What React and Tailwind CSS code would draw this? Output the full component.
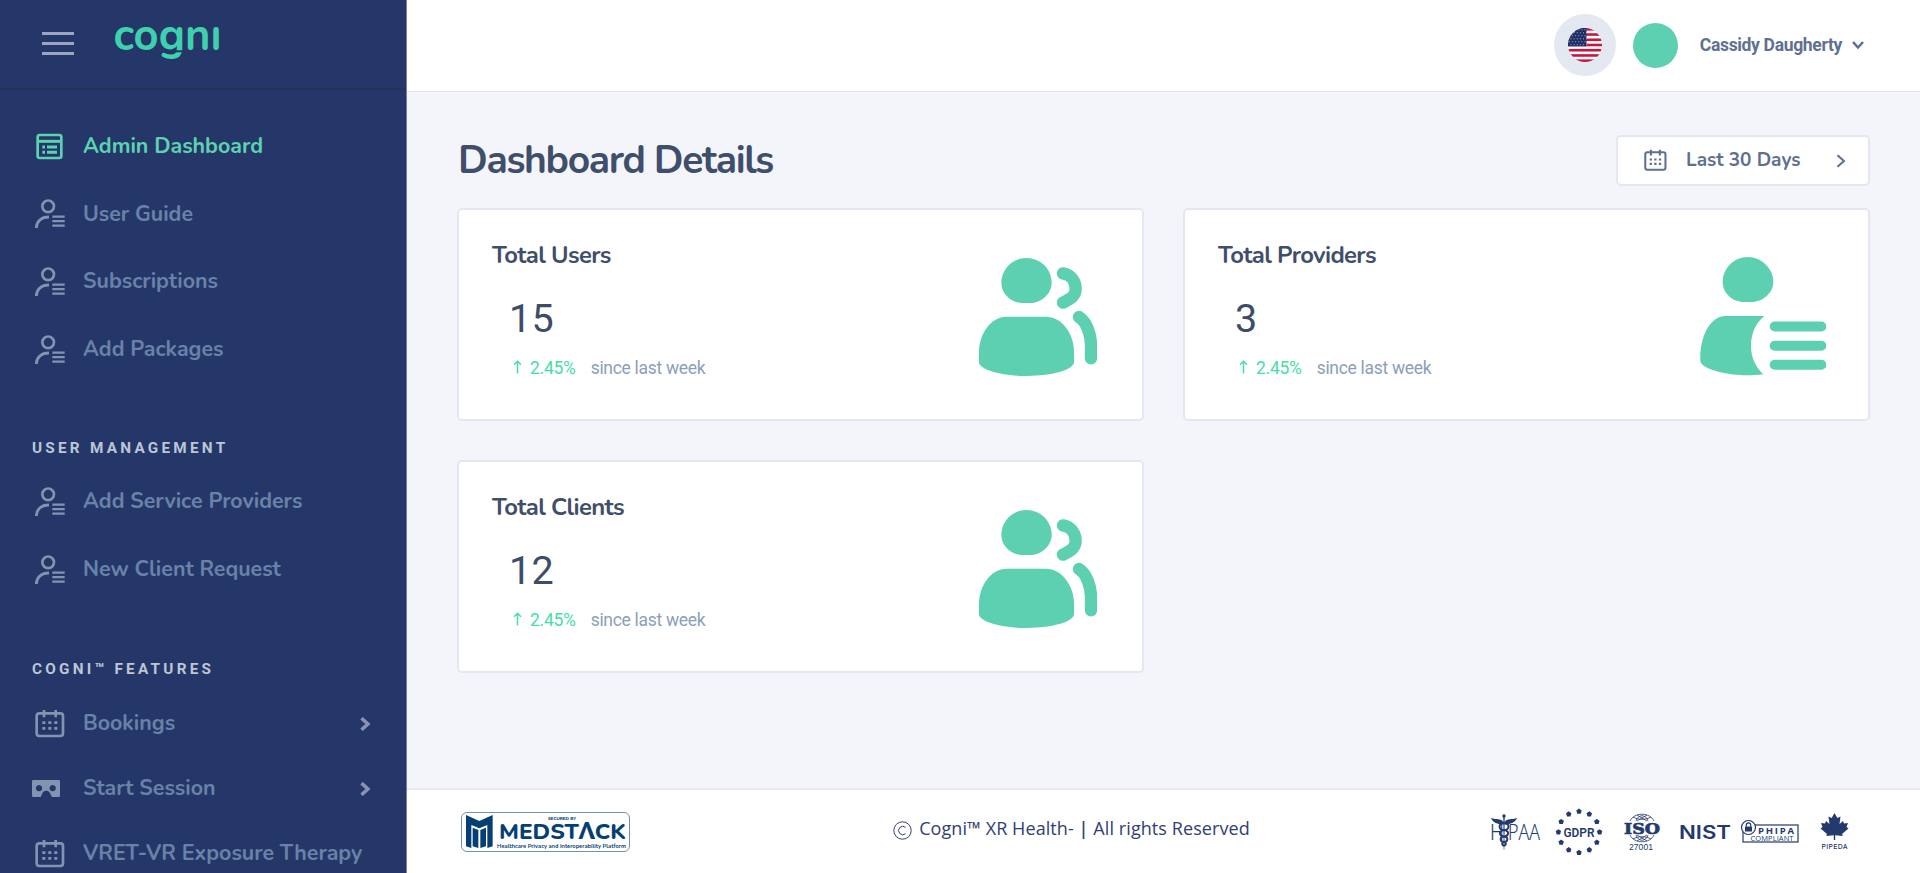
import React from "react";

const rounded = "font-['Nunito','Lato',sans-serif]";

function PersonListIcon() {
  return (
    <svg width="30" height="30" viewBox="0 0 90 90" fill="none" stroke="currentColor" className="shrink-0">
      <circle cx="39.5" cy="22" r="17.5" strokeWidth="8" />
      <path d="M4 87 C5 67 18 54 42 54" strokeWidth="8.500" />
      <path d="M52 53 H89 M52 66.500 H89 M52 80 H89" strokeWidth="7" />
    </svg>
  );
}

function BoardIcon() {
  return (
    <svg width="30" height="30" viewBox="0 0 90 90" fill="none" stroke="currentColor" className="shrink-0">
      <rect x="8" y="9" width="71" height="69" rx="6" strokeWidth="8" />
      <path d="M8 28 H80" strokeWidth="9" />
      <path d="M22 45 H30 M36 45 H66 M22 61 H30 M36 61 H66" strokeWidth="9" />
    </svg>
  );
}

function CalendarIcon({ size = 30 }) {
  return (
    <svg width={size} height={size} viewBox="0 0 90 90" fill="none" stroke="currentColor" className="shrink-0">
      <rect x="5" y="13" width="79" height="68" rx="8" strokeWidth="8" />
      <path d="M27 3 V25 M62 3 V25" strokeWidth="8" />
      <path d="M22 41 H31 M40 41 H49 M58 41 H67 M22 58 H31 M40 58 H49 M58 58 H67" strokeWidth="8.500" />
    </svg>
  );
}

function VrIcon() {
  return (
    <svg width="28" height="17" viewBox="0 0 84 51" className="shrink-0">
      <path
        fill="currentColor"
        fillRule="evenodd"
        d="M4 0 H80 Q84 0 84 4 V47 Q84 51 80 51 H60 L52 36 Q42 28 33 36 L26 51 H4 Q0 51 0 47 V4 Q0 0 4 0 Z M21 15 a9.500 9.500 0 1 0 .1 0 Z M62 15 a9.500 9.500 0 1 0 .1 0 Z"
      />
    </svg>
  );
}

function Chevron({ className, size = 12, width = 2.6 }) {
  return (
    <svg width={size} height={size} viewBox="0 0 12 12" fill="none" stroke="currentColor" strokeWidth={width} className={className}>
      <path d="M3 1 L8.500 6 L3 11" />
    </svg>
  );
}

function NavItem({ icon, label, active, arrow, short }) {
  return (
    <a
      className={`flex shrink-0 items-center pl-[35px] pr-[34px] ${short ? "h-[64.800px]" : "h-[67.600px]"} ${
        active ? "text-[#5dd2b1]" : "text-[#6982a8]"
      }`}
    >
      <span className={`flex w-[48px] items-center ${active ? "" : "text-[#8095b0]"}`}>{icon}</span>
      <span className={`${rounded} whitespace-nowrap text-[21.400px] font-bold leading-none`}>{label}</span>
      {arrow && <Chevron size={14} width={3} className="ml-auto text-[#8a93b0]" />}
    </a>
  );
}

function SectionTitle({ children, className }) {
  return (
    <div className={`shrink-0 whitespace-nowrap pl-8 font-['Roboto',sans-serif] text-[15.300px] font-bold leading-6 tracking-[3.250px] text-[#bcc6d6] ${className}`}>
      {children}
    </div>
  );
}

function Sidebar() {
  return (
    <aside className="flex h-full w-[407px] shrink-0 flex-col overflow-hidden border-r border-[#76829c] bg-[#253768]">
      <div className="flex h-[90px] shrink-0 items-start border-b-2 border-[#22325a] pl-[42px]">
        <button className="mt-8 flex w-[32px] flex-col gap-[7px]">
          <span className="h-[3px] bg-[#9ba5bf]" />
          <span className="h-[3px] bg-[#9ba5bf]" />
          <span className="h-[3px] bg-[#9ba5bf]" />
        </button>
        <svg width="112" height="66" viewBox="0 0 112 66" className="ml-[39px] mt-[7px] overflow-visible">
          <text x="0.500" y="42.500" textLength="108" lengthAdjust="spacingAndGlyphs" fontFamily="Nunito, Lato, sans-serif" fontWeight="700" fontSize="46" fill="#3fd0ae">
            cognı
          </text>
          <rect x="46" y="43.300" width="26" height="2" fill="#253768" />
        </svg>
      </div>
      <nav className="flex flex-col pt-[23px]">
        <NavItem active icon={<BoardIcon />} label="Admin Dashboard" />
        <NavItem icon={<PersonListIcon />} label="User Guide" />
        <NavItem icon={<PersonListIcon />} label="Subscriptions" />
        <NavItem icon={<PersonListIcon />} label="Add Packages" />
        <SectionTitle className="mt-[53px]">USER MANAGEMENT</SectionTitle>
        <div className="h-2" />
        <NavItem icon={<PersonListIcon />} label="Add Service Providers" />
        <NavItem icon={<PersonListIcon />} label="New Client Request" />
        <SectionTitle className="mt-[53px]">COGNI™ FEATURES</SectionTitle>
        <div className="h-[11px]" />
        <NavItem short arrow icon={<CalendarIcon />} label="Bookings" />
        <NavItem short arrow icon={<span className="-ml-[3px]"><VrIcon /></span>} label="Start Session" />
        <NavItem short icon={<CalendarIcon />} label="VRET-VR Exposure Therapy" />
      </nav>
    </aside>
  );
}

function UsFlag() {
  const stars = [];
  for (let r = 0; r < 6; r++) for (let c = 0; c < 6; c++) stars.push([1.5 + c * 3.1 + (r % 2) * 1.5, 1.8 + r * 3]);
  return (
    <svg width="34" height="34" viewBox="0 0 34 34">
      <clipPath id="flag"><circle cx="17" cy="17" r="17" /></clipPath>
      <g clipPath="url(#flag)">
        <rect width="34" height="34" fill="#fff" />
        {[0, 1, 2, 3, 4, 5, 6].map((i) => (
          <rect key={i} y={i * 5.23} width="34" height="2.615" fill="#c8173f" />
        ))}
        <rect width="18.500" height="18.300" fill="#1c2f66" />
        {stars.map(([x, y], i) => (
          <circle key={i} cx={x} cy={y} r="0.550" fill="#c9cfe0" />
        ))}
      </g>
    </svg>
  );
}

function TopBar() {
  return (
    <header className="flex h-[92px] shrink-0 items-center justify-end border-b border-[#e3e6f0] bg-white pb-px pr-[56px]">
      <div className="flex size-[62px] items-center justify-center rounded-full bg-[#e4e8f1]">
        <UsFlag />
      </div>
      <div className="ml-[17px] size-[45px] rounded-full bg-[#5dd0b1]" />
      <span className="ml-[22px] font-['Roboto',sans-serif] text-[17.500px] font-bold tracking-[-0.330px] text-[#5f7092]">Cassidy Daugherty</span>
      <Chevron size={12} width={2.4} className="ml-[10px] rotate-90 text-[#5a6c8f]" />
    </header>
  );
}

function UsersArt() {
  return (
    <svg width="118.500" height="118" viewBox="117 174 355.500 354" fill="#5dd0b1">
      <path d="M259 174 C302 174 335 208 335 248 C335 283 302 309 270 309 H248 C214 309 184 282 184 248 C184 208 217 174 259 174Z" />
      <path d="M200 350 H318 C366 350 402 402 402 455 V487 C402 508 340 528 260 528 C180 528 117 508 117 487 V455 C117 402 152 350 200 350Z" />
      <path d="M369 220 C392 224 407 243 407 267 C407 290 388 297 369 308 M417 351 C440 365 453 405 453 435 V475" fill="none" stroke="#5dd0b1" strokeWidth="37" strokeLinecap="round" strokeLinejoin="round" />
    </svg>
  );
}

function ProvidersArt() {
  return (
    <svg width="126.500" height="118.500" viewBox="180 169 379.500 355.500" fill="#5dd0b1">
      <path d="M323 169 C366 169 400 205 400 244 C400 278 366 304 335 304 H311 C278 304 248 278 248 244 C248 204 281 169 323 169Z" />
      <path d="M256 346 H373 C346 368 333 400 333 436 C333 470 347 500 370 521 C352 523.500 340 524 322 524 C240 522 181 500 181 480 C179 400 215 346 256 346Z" />
      <path d="M404 377.500 H544 M404 435 H544 M404 492.500 H544" fill="none" stroke="#5dd0b1" strokeWidth="30" strokeLinecap="round" />
    </svg>
  );
}

function StatCard({ title, value, art, artPad }) {
  return (
    <section className={`flex h-[213px] items-start justify-between rounded-[5px] border-2 border-[#e4e7f0] bg-white pl-[33px] ${artPad}`}>
      <div>
        <h2 className={`${rounded} mt-[29px] text-[23.800px] font-bold leading-8 tracking-[-0.620px] text-[#3f4f6b]`}>{title}</h2>
        <div className="ml-[17px] mt-[25px] font-['Roboto',sans-serif] text-[39.500px] leading-[46px] tracking-[0.200px] text-[#3d4d69]">{value}</div>
        <div className="ml-[21px] mt-[14px] flex items-center font-['Roboto',sans-serif] text-[17.500px] leading-6">
          <svg width="9" height="14" viewBox="0 0 9 14" fill="none" stroke="#46dda6" strokeWidth="1.500" className="-mt-0.5">
            <path d="M4.500 13.500 V1.500 M1 4.800 L4.500 1.300 L8 4.800" />
          </svg>
          <span className="ml-[8px] tracking-[-0.250px] text-[#46dda6]">2.45%</span>
          <span className="ml-[15px] tracking-[-0.300px] text-[#8ba0b8]">since last week</span>
        </div>
      </div>
      {art}
    </section>
  );
}

function Medstack() {
  return (
    <div className="flex h-[40px] w-[169px] items-center rounded-[6px] border border-[#7590ae] pl-1 text-[#063f73]">
      <svg width="27" height="33" viewBox="0 0 81 99" fill="currentColor">
        <path d="M0 0 L40 18 L80 0 V94 L64 99 V30 L40 40 L16 30 V99 L0 94 Z" />
        <path d="M20 38 L37 45 V99 L20 94 Z M60 38 L43 45 V99 L60 94 Z" />
      </svg>
      <svg width="132" height="38" viewBox="0 0 132 38" className="ml-1 overflow-visible" fill="currentColor" fontFamily="Nunito, Lato, sans-serif">
        <text x="51" y="6.500" fontSize="4.500" fontWeight="800" textLength="28">SECURED BY</text>
        <text x="2" y="26.300" fontSize="22.500" fontWeight="800" textLength="127" lengthAdjust="spacingAndGlyphs">MEDSTΛCK</text>
        <text x="0" y="34.500" fontSize="6" fontWeight="700" textLength="129" lengthAdjust="spacingAndGlyphs">Healthcare Privacy and Interoperability Platform</text>
      </svg>
    </div>
  );
}

function Badges() {
  const stars = Array.from({ length: 12 }, (_, i) => {
    const a = (i * Math.PI) / 6;
    return [24 + 20.6 * Math.sin(a), 24 - 20.6 * Math.cos(a)];
  });
  return (
    <div className="flex items-center text-[#243a6e]">
      <svg width="50" height="36" viewBox="0 0 50 36" fill="currentColor" className="overflow-visible">
        <g fontFamily="'Open Sans', sans-serif" fontWeight="300" fontSize="21.500" stroke="currentColor" strokeWidth="0.200">
          <text x="-1" y="25.500" textLength="14" lengthAdjust="spacingAndGlyphs">H</text>
          <text x="17" y="25.500" textLength="32" lengthAdjust="spacingAndGlyphs">PAA</text>
        </g>
        <circle cx="13" cy="2" r="1.700" />
        <path d="M12.300 2 H13.700 L13.300 35.500 H12.700 Z" />
        <path d="M12.500 8 C10 4 5 6 0 4 C2 9 8 11 12.500 10 Z M13.500 8 C16 4 21 6 26 4 C24 9 18 11 13.500 10 Z" />
        <path d="M13 9 C6 10 8 16 13 16 C19 17 18 22 13 22.500 C8 23 9 28 13 28 C16 28.500 15 31 13 32 M13 9 C20 10 18 16 13 16 C7 17 8 22 13 22.500 C18 23 17 28 13 28 C10 28.500 11 31 13 32" fill="none" stroke="currentColor" strokeWidth="1.900" />
      </svg>
      <svg width="48" height="48" viewBox="0 0 48 48" fill="currentColor" className="ml-[14px]">
        {stars.map(([x, y], i) => (
          <polygon key={i} transform={`translate(${x} ${y})`} points="0,-2.800 2.700,-.9 1.700,2.400 -1.700,2.400 -2.700,-.9" />
        ))}
        <text x="8.500" y="28.800" fontFamily="'Roboto', sans-serif" fontWeight="600" fontSize="13.500" textLength="31" lengthAdjust="spacingAndGlyphs">GDPR</text>
      </svg>
      <svg width="38" height="40" viewBox="0 0 38 40" fill="none" stroke="currentColor" strokeWidth="0.800" className="ml-[20px]">
        <path d="M7 9 C11 0 27 0 31 9 M13 9 C15 2 23 2 25 9 M10 5 C15 8 23 8 28 5 M14 3 L24 9 M24 3 L14 9 M7 23 C11 32 27 32 31 23 M13 23 C15 30 23 30 25 23 M10 27 C15 24 23 24 28 27 M14 29 L24 23 M24 29 L14 23" />
        <g fill="currentColor" stroke="none">
          <text x="1" y="21.500" fontFamily="'DejaVu Serif', serif" fontWeight="700" fontSize="15.500" textLength="36" lengthAdjust="spacingAndGlyphs" stroke="currentColor" strokeWidth="0.700">ISO</text>
          <text x="6" y="37.500" fontFamily="'Liberation Sans', sans-serif" fontSize="9.500" textLength="24" lengthAdjust="spacingAndGlyphs">27001</text>
        </g>
      </svg>
      <svg width="52" height="16" viewBox="0 0 52 16" className="ml-[18px] overflow-visible" fill="currentColor">
        <text x="0" y="14.500" fontFamily="Inter, sans-serif" fontWeight="600" fontSize="18" textLength="52" lengthAdjust="spacingAndGlyphs">NIST</text>
      </svg>
      <svg width="59" height="24" viewBox="0 0 59 24" fill="none" stroke="currentColor" className="ml-[9px] overflow-visible">
        <rect x="3" y="5" width="55" height="17" strokeWidth="1.200" />
        <circle cx="8.500" cy="7.500" r="7" fill="#fff" strokeWidth="1.200" />
        <rect x="5" y="6.500" width="7" height="5" fill="currentColor" stroke="none" />
        <path d="M6.300 6.500 V5 a2.200 2.200 0 0 1 4.400 0 V6.500" strokeWidth="1.200" />
        <g fill="currentColor" stroke="none" fontFamily="'Open Sans', sans-serif">
          <text x="18" y="13.800" fontWeight="700" fontSize="9.500" textLength="36">PHIPA</text>
          <text x="10.500" y="21" fontSize="7.500" textLength="43">COMPLIANT</text>
        </g>
      </svg>
      <svg width="30" height="40" viewBox="0 0 30 40" fill="currentColor" className="ml-[21px]">
        <path d="M14.500 1 L17.300 6 L20.500 4.500 L19.500 12 L23 9 L24 11.500 L28 11 L26.500 15 L28.500 16.500 L22 22 L22.800 24 L15.200 23.300 V28 H13.800 V23.300 L6.200 24 L7 22 L.5 16.500 L2.500 15 L1 11 L5 11.500 L6 9 L9.500 12 L8.500 4.500 L11.700 6 Z" />
        <text x="1.500" y="36.500" fontFamily="Inter, sans-serif" fontWeight="500" fontSize="6.800" textLength="26">PIPEDA</text>
      </svg>
    </div>
  );
}

function Footer() {
  return (
    <footer className="flex h-[85px] shrink-0 items-center justify-between border-t-2 border-[#e6e9f1] bg-white pl-[54px] pr-[70px]">
      <Medstack />
      <div className="-mt-2 ml-[22px] flex items-center text-[#2f4074]">
        <svg width="19" height="19" viewBox="0 0 19 19" fill="none" stroke="currentColor" className="mt-[6px]">
          <circle cx="9.500" cy="9.500" r="8.700" strokeWidth="1" />
          <path d="M12.500 6.300 A4.200 4.200 0 1 0 12.500 12.700" strokeWidth="1" />
        </svg>
        <p className="ml-[7px] whitespace-nowrap font-['Open_Sans',sans-serif] text-[18px] leading-6 tracking-[0.080px]">
          Cogni™ XR Health- <span className="font-semibold">|</span> All rights Reserved
        </p>
      </div>
      <Badges />
    </footer>
  );
}

export default function App() {
  return (
    <div className="flex h-[873px] w-[1920px] overflow-hidden bg-[#f4f5fa]">
      <Sidebar />
      <div className="flex min-w-0 flex-1 flex-col">
        <TopBar />
        <main className="flex-1 pl-[50px] pr-[50px] pt-[43px]">
          <div className="flex items-start justify-between">
            <h1 className={`${rounded} mt-px pl-px text-[39px] font-bold leading-[49px] tracking-[-1.320px] text-[#3f4f6b]`}>Dashboard Details</h1>
            <button className="flex h-[51px] w-[254px] items-center rounded-[5px] border-2 border-[#e4e7f0] bg-white pl-[26px] pr-[20px] text-[#5f6f90]">
              <CalendarIcon size={23} />
              <span className={`${rounded} ml-[19px] whitespace-nowrap text-[19px] font-bold`}>Last 30 Days</span>
              <Chevron size={14} width={1.8} className="ml-auto" />
            </button>
          </div>
          <div className="mt-[22px] grid grid-cols-2 gap-x-[39px] gap-y-[39px]">
            <StatCard title="Total Users" value="15" art={<span className="mt-[48px]"><UsersArt /></span>} artPad="pr-[45px]" />
            <StatCard title="Total Providers" value="3" art={<span className="mt-[47px]"><ProvidersArt /></span>} artPad="pr-[42px]" />
            <StatCard title="Total Clients" value="12" art={<span className="mt-[48px]"><UsersArt /></span>} artPad="pr-[45px]" />
          </div>
        </main>
        <Footer />
      </div>
    </div>
  );
}
